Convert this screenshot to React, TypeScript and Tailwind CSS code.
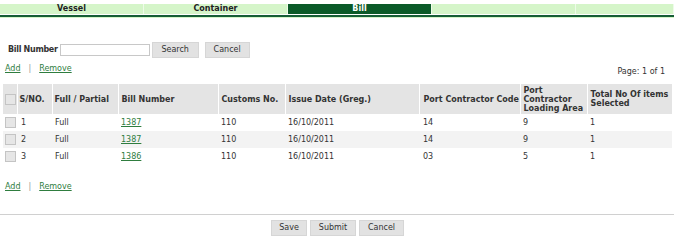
import React from "react";

const tabs = ["Vessel", "Container", "Bill", "", ""];

const rows = [
  { sno: "1", type: "Full", bill: "1387", customs: "110", date: "16/10/2011", code: "14", area: "9", total: "1" },
  { sno: "2", type: "Full", bill: "1387", customs: "110", date: "16/10/2011", code: "14", area: "9", total: "1" },
  { sno: "3", type: "Full", bill: "1386", customs: "110", date: "16/10/2011", code: "03", area: "5", total: "1" },
];

const Check = () => (
  <span className="inline-block w-[11px] h-[11px] border border-[#c4c4c4] bg-[#e6e6e6] align-middle" />
);

const GrayButton = ({ label, w }: { label: string; w: string }) => (
  <button className={`${w} h-[16px] bg-[#e2e2e2] border border-[#d6d6d6] text-[#333] text-[8px] leading-none`}>
    {label}
  </button>
);

const AddRemove = () => (
  <div className="flex items-center text-[8px] leading-[10px] pl-[5px]">
    <a className="text-[#2f7d3f] underline">Add</a>
    <span className="text-[#999] mx-[8px]">|</span>
    <a className="text-[#2f7d3f] underline">Remove</a>
  </div>
);

export default function App() {
  return (
    <div className="w-[674px] h-[242px] bg-white text-[#333] font-['DejaVu_Sans',sans-serif] text-[8px] overflow-hidden">
      <div className="pt-[4px]">
        <div className="flex h-[10px] bg-[#d5f5c9]">
          {tabs.map((t, i) => (
            <div
              key={i}
              className={`flex items-center justify-center font-bold text-[8px] leading-none border-r border-[#eefbe9] ${
                i === 4 ? "flex-1" : "w-[144px]"
              } ${t === "Bill" ? "bg-[#0b5a28] text-white" : "text-[#222]"}`}
            >
              {t}
            </div>
          ))}
        </div>
        <div className="mt-[1px] h-[3px] bg-[#165e36] border-b border-[#d5f5c9]" />
      </div>

      <div className="flex items-center mt-[24px] pl-[8px]">
        <span className="font-bold text-[8px] tracking-[-0.3px] mr-[2px]">Bill Number</span>
        <input className="w-[90px] h-[12px] border border-[#c8c8c8] bg-white" />
        <div className="ml-[2px]">
          <GrayButton label="Search" w="w-[47px]" />
        </div>
        <div className="ml-[6px]">
          <GrayButton label="Cancel" w="w-[45px]" />
        </div>
      </div>

      <div className="flex items-start justify-between mt-[6px] pr-[9px]">
        <AddRemove />
        <span className="text-[8px] leading-[10px] mt-[3px]">Page: 1 of 1</span>
      </div>

      <table className="mt-[7px] ml-[3px] w-[669px] border-collapse text-left">
        <thead>
          <tr className="bg-[#e4e4e4] h-[30px] font-bold text-[8px] leading-[9px]">
            <th className="w-[14px] pl-[2px] border-r border-white"><Check /></th>
            <th className="w-[35px] pl-[2px] border-r border-white">S/NO.</th>
            <th className="w-[66px] pl-[2px] border-r border-white">Full / Partial</th>
            <th className="w-[100px] pl-[3px] border-r border-white">Bill Number</th>
            <th className="w-[67px] pl-[3px] border-r border-white">Customs No.</th>
            <th className="w-[134px] pl-[3px] border-r border-white">Issue Date (Greg.)</th>
            <th className="w-[101px] pl-[4px] border-r border-white">Port Contractor Code</th>
            <th className="w-[67px] pl-[3px] border-r border-white">Port Contractor Loading Area</th>
            <th className="pl-[3px]">Total No Of items Selected</th>
          </tr>
        </thead>
        <tbody>
          {rows.map((r, i) => (
            <tr key={i} className={`h-[17px] text-[8px] ${i === 1 ? "bg-[#f3f3f3]" : "bg-white"}`}>
              <td className="pl-[2px]"><Check /></td>
              <td className="pl-[4px]">{r.sno}</td>
              <td className="pl-[3px]">{r.type}</td>
              <td className="pl-[3px]">
                <a className="text-[#2f7d3f] underline">{r.bill}</a>
              </td>
              <td className="pl-[3px]">{r.customs}</td>
              <td className="pl-[3px]">{r.date}</td>
              <td className="pl-[4px]">{r.code}</td>
              <td className="pl-[3px]">{r.area}</td>
              <td className="pl-[3px]">{r.total}</td>
            </tr>
          ))}
        </tbody>
      </table>

      <div className="mt-[17px]">
        <AddRemove />
      </div>

      <div className="mt-[22px] border-t border-[#d0d0d0] flex justify-center gap-[3px] pt-[5px] pl-[1px]">
        <GrayButton label="Save" w="w-[36px]" />
        <GrayButton label="Submit" w="w-[46px]" />
        <GrayButton label="Cancel" w="w-[45px]" />
      </div>
    </div>
  );
}
